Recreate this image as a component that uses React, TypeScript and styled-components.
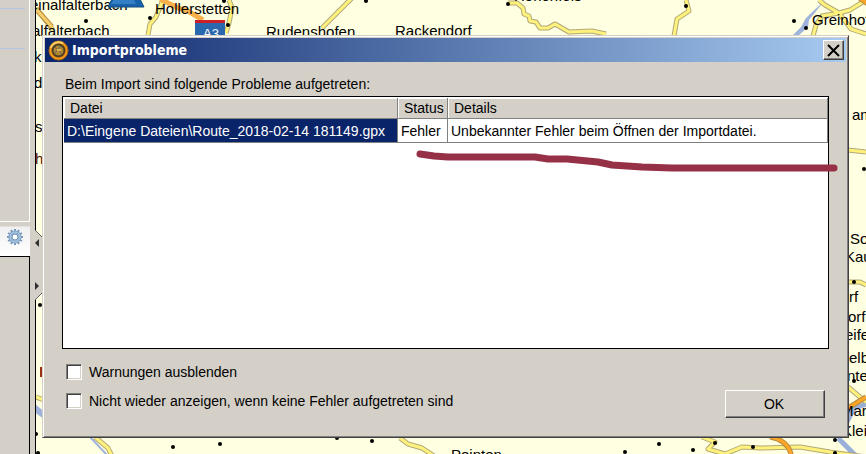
import React from "react";
import styled, { createGlobalStyle } from "styled-components";

const face = "#d4d0c8";
const navy = "#0a246a";
const sans = '"Liberation Sans", Arial, sans-serif';

const GlobalStyle = createGlobalStyle`
  *, *::before, *::after { box-sizing: border-box; }
  body { margin: 0; font: 14px/20px ${sans}; color: #000; background: ${face}; overflow: hidden; }
`;

const Page = styled.div`
  position: relative;
  display: grid;
  grid-template-columns: 30px 5px minmax(0, 1fr);
  height: 100vh;
  background: ${face};
`;

const Sidebar = styled.aside`
  display: flex;
  flex-direction: column;
  background: ${face};
`;

const TopPanel = styled.div`
  display: flex;
  flex-direction: column;
  gap: 39px;
  height: 222px;
  padding-top: 8px;
  border: solid #fff;
  border-width: 0 1px 1px 0;
`;

const Rule = styled.div`
  width: 25px;
  height: 1px;
  background: #b4c4e4;
`;

const ToolStrip = styled.div`
  display: flex;
  justify-content: center;
  height: 34px;
  padding: 6px 0 10px;
  background: linear-gradient(#d4d0c8 0 4px, #f0f0f0 5px, #fff);
`;

const IconButton = styled.button`
  display: flex;
  padding: 0;
  border: 0;
  background: none;
`;

const BottomPanel = styled.div`
  flex: 1;
  border: solid #000;
  border-width: 1px 1px 0 0;
`;

const MapPane = styled.main`
  position: relative;
  overflow: hidden;
  background: #ffffe1;
  border-left: 1px solid #000;
`;

const MapDrawing = styled.svg`
  display: block;
  width: 100%;
  height: 100%;
  font: 15px ${sans};
`;

const CollapseHandle = styled.svg`
  position: absolute;
  left: 35px;
  top: 228px;
`;

const Dialog = styled.section`
  position: absolute;
  top: 35px;
  left: 42px;
  right: 17px;
  padding: 1px;
  background: ${face};
  border: 1px solid;
  border-color: ${face} #404040 #404040 ${face};
  box-shadow: inset 1px 1px #fff, inset -1px -1px #808080;
`;

const TitleBar = styled.header`
  display: flex;
  align-items: center;
  gap: 3px;
  height: 24px;
  margin: 1px 1px 0;
  padding: 0 2px 0 3px;
  background: linear-gradient(90deg, ${navy}, #a6caf0);
  color: #fff;
`;

const Title = styled.h1`
  flex: 1;
  margin: 0;
  font: bold 14px/20px "DejaVu Sans Condensed", "DejaVu Sans", sans-serif;
`;

const RaisedButton = styled.button`
  display: flex;
  align-items: center;
  justify-content: center;
  padding: 0;
  font: inherit;
  color: #000;
  background: ${face};
  border: 1px solid;
  border-color: #fff #404040 #404040 #fff;
  box-shadow: inset -1px -1px #808080;
`;

const CloseButton = styled(RaisedButton)`
  width: 21px;
  height: 20px;
`;

const OkButton = styled(RaisedButton)`
  width: 100px;
  height: 28px;
  padding-right: 2px;
`;

const Body = styled.div`
  padding: 12px 18px 18px;
`;

const Intro = styled.p`
  margin: 0 0 2px;
  padding-left: 3px;
`;

const ListBox = styled.div`
  position: relative;
  height: 253px;
  background: #fff;
  border: 1px solid #000;
  padding: 1px 0 0 1px;
`;

const Table = styled.table`
  width: 100%;
  table-layout: fixed;
  border-collapse: separate;
  border-spacing: 0;
  white-space: nowrap;
`;

const Column = styled.col<{ $width?: number }>`
  width: ${(p) => (p.$width ? `${p.$width}px` : "auto")};
`;

const HeadCell = styled.th`
  height: 21px;
  padding: 1px 0 0 6px;
  font-weight: normal;
  line-height: 19px;
  text-align: left;
  background: ${face};
  border: solid #808080;
  border-width: 0 1px 1px 0;
  box-shadow: inset 1px 1px #fff;
`;

const Cell = styled.td<{ $selected?: boolean }>`
  height: 24px;
  padding: 0 0 0 3px;
  color: ${(p) => (p.$selected ? "#fff" : "#000")};
  background: ${(p) => (p.$selected ? navy : "#fff")};
  border: solid #808080;
  border-width: 0 1px 1px 0;
`;

const Marker = styled.svg`
  position: absolute;
  top: 50px;
  right: -12px;
`;

const Footer = styled.footer`
  display: flex;
  justify-content: space-between;
  align-items: flex-end;
  padding: 13px 4px 0 4px;
`;

const Options = styled.div`
  display: flex;
  flex-direction: column;
  gap: 9px;
  padding-bottom: 7px;
`;

const Option = styled.label`
  display: flex;
  align-items: center;
  gap: 7px;
`;

const CheckBox = styled.input`
  appearance: none;
  width: 16px;
  height: 16px;
  margin: 0;
  background: #fff;
  border: 1px solid;
  border-color: #808080 #fff #fff #808080;
  box-shadow: inset 1px 1px #404040, inset -1px -1px ${face};
`;

const yellowRoads = [
  "M36 8 L53 30",
  "M163 0 L156 17 L150 24 L148 35 M229 0 L232 8 L229 23 L226 33",
  "M354 -4 L322 28",
  "M508 3 L517 3 L523 8 L524 14 L529 16 L530 21 L536 22 L540 28 L548 28 L555 24 L569 32 L592 31 L606 34",
  "M686 0 L689 11 L677 19 L674 36",
  "M819 0 L825 5 L839 13 L850 10 L866 0 M839 13 L822 16 L816 25 L813 36 M839 13 L851 29 L866 34",
  "M848 150 L866 152",
  "M848 282 L860 282 L866 285",
  "M848 387 L866 402",
  "M400 438 L408 444 L422 448 L434 456",
  "M36 397 L44 400",
  "M95 437 L108 448 L112 456",
  "M702 437 L715 442 L708 449 L725 454 L742 447 L760 448 L800 447 L830 452 L866 457",
];

const mapDots: number[][] = [
  [86, 21], [150, 18], [228, 25], [224, 1], [366, 1], [508, 4], [686, 6],
  [794, 21], [806, 28], [864, 169], [854, 282], [40, 305], [173, 447],
  [220, 444], [337, 438], [372, 441], [625, 452], [659, 444], [693, 450],
  [715, 443], [753, 447], [835, 440], [835, 453], [854, 381], [36, 434], [38, 453],
];

const mapLabels: [number, number, string][] = [
  [30, 10, "einalfalterbach"], [32, 36, "alfalterbach"], [155, 14, "Hollerstetten"],
  [266, 37, "Rudenshofen"], [395, 36, "Rackendorf"], [514, 1, "Hohenfels"],
  [812, 25, "Greinhof"], [34, 62, "k"], [34, 88, "d"], [35, 132, "s"],
  [852, 120, "am"], [850, 244, "Sollach"], [845, 262, "Kauern"], [849, 302, "rf"],
  [848, 322, "orf"], [845, 340, "eifen"], [849, 363, "elb"], [847, 381, "nten"],
  [841, 416, "Marn"], [842, 436, "Klein"], [451, 460, "Pointen"],
];

function MapCanvas() {
  return (
    <MapDrawing viewBox="36 0 830 454" preserveAspectRatio="xMinYMin slice" aria-label="Karte">
      <path d="M825 0 L806 18 L801 27 L792 36 L798 36 L808 27 L809 20 Z" fill="#9fb3dd" />
      <path d="M36 406 L42 411 L44 418 L36 412 Z M90 437 L108 456" fill="#9fb3dd" stroke="#9fb3dd" strokeWidth="2" />
      <path d="M838 438 L858 458 M846 424 L854 408 L866 404" fill="none" stroke="#9bb0d8" strokeWidth="5" />
      {yellowRoads.map((d) => (
        <g key={d} fill="none" strokeLinejoin="round">
          <path d={d} stroke="#b2a878" strokeWidth="5" />
          <path d={d} stroke="#fff27c" strokeWidth="3" />
        </g>
      ))}
      <g fill="none" stroke="#b98b3e" strokeWidth="5">
        <path d="M37 10 L52 27" />
        <path d="M770 437 Q789 440 792 458 M848 408 L866 397 M858 -3 L868 4" />
      </g>
      <g fill="none" stroke="#f7b04b" strokeWidth="3">
        <path d="M37 10 L52 27" stroke="#f5ce6b" />
        <path d="M160 -1 L178 8 L188 11 L203 20" strokeWidth="5" />
        <path d="M770 437 Q789 440 792 458 M848 408 L866 397 M858 -3 L868 4" stroke="#ffa627" />
      </g>
      {mapDots.map(([x, y]) => (
        <circle key={`${x}-${y}`} cx={x} cy={y} r="2" />
      ))}
      <path d="M195 21 H225 V45 H195 Z" fill="#2968ad" />
      <path d="M195 20 H225 V23 H195 Z" fill="#cb2027" />
      <text x="203" y="38" fill="#fff" fontSize="13">A3</text>
      {mapLabels.map(([x, y, label]) => (
        <text key={label} x={x} y={y}>{label}</text>
      ))}
      <text x="35" y="164" fill="#501008">h</text>
      <path d="M113 -3 H139 L144 7 H108 Z" fill="#1762a8" stroke="#174d82" />
      <path d="M115 -2 H133 L136 4 H111 Z" fill="#347fc5" />
      <path d="M41 367 V377" stroke="#9b3010" strokeWidth="2" />
    </MapDrawing>
  );
}

function GearIcon() {
  const teeth = Array.from({ length: 12 }, (_, i) => i * 30);
  return (
    <svg width="18" height="18" viewBox="-9 -9 18 18" aria-hidden="true">
      {teeth.map((a) => (
        <path key={a} d="M-1 -8 H1 V-5 H-1 Z" fill="#7998b9" transform={`rotate(${a})`} />
      ))}
      <circle r="5" fill="#e9f2fa" stroke="#7fa3c8" strokeWidth="3" />
      <circle r="5" fill="none" stroke="#b4d0e8" />
      <circle r="3" fill="#fff" stroke="#688bb0" />
    </svg>
  );
}

function AppIcon() {
  return (
    <svg width="21" height="21" viewBox="0 0 21 21" aria-hidden="true">
      <circle cx="10.5" cy="10.5" r="9.5" fill="#f09a1c" stroke="#b5690c" />
      <path d="M3 8 A8 8 0 0 1 15 3.5" fill="none" stroke="#ffd269" strokeWidth="2" />
      <circle cx="10.5" cy="10.5" r="6" fill="#8b8d48" stroke="#573c1c" strokeWidth="2" />
      <path d="M6 9 L9 6 L14 8 L15 13 L11 15 L7 13 Z" fill="#b98533" />
      <path d="M7 7 L14 14 M13 6 L7 13" stroke="#536d5c" />
      <path d="M9 10 H13" stroke="#e2b14f" strokeWidth="2" />
    </svg>
  );
}

export default function App() {
  return (
    <Page>
      <GlobalStyle />
      <Sidebar>
        <TopPanel>
          <Rule />
          <Rule />
        </TopPanel>
        <ToolStrip>
          <IconButton aria-label="Einstellungen"><GearIcon /></IconButton>
        </ToolStrip>
        <BottomPanel />
      </Sidebar>
      <div />
      <MapPane><MapCanvas /></MapPane>
      <CollapseHandle width="8" height="74" viewBox="0 0 8 74" aria-hidden="true">
        <path d="M0 2 L8 10 V64 L0 72 Z" fill={face} />
        <path d="M0 2 L8 10 M0 72 L8 64" stroke="#606060" fill="none" />
        <path d="M4 11 V19 L0 15 Z M0 54 V62 L4 58 Z" fill="#303030" />
      </CollapseHandle>
      <Dialog role="dialog" aria-labelledby="dialog-title">
        <TitleBar>
          <AppIcon />
          <Title id="dialog-title">Importprobleme</Title>
          <CloseButton aria-label="Schließen">
            <svg width="13" height="13" viewBox="0 0 13 13" aria-hidden="true">
              <path d="M1 1 L12 12 M12 1 L1 12" stroke="#000" strokeWidth="2" />
            </svg>
          </CloseButton>
        </TitleBar>
        <Body>
          <Intro>Beim Import sind folgende Probleme aufgetreten:</Intro>
          <ListBox>
            <Table>
              <colgroup>
                <Column $width={334} />
                <Column $width={50} />
                <Column />
              </colgroup>
              <thead>
                <tr>
                  <HeadCell scope="col">Datei</HeadCell>
                  <HeadCell scope="col">Status</HeadCell>
                  <HeadCell scope="col">Details</HeadCell>
                </tr>
              </thead>
              <tbody>
                <tr>
                  <Cell $selected>D:\Eingene Dateien\Route_2018-02-14 181149.gpx</Cell>
                  <Cell>Fehler</Cell>
                  <Cell>Unbekannter Fehler beim Öffnen der Importdatei.</Cell>
                </tr>
              </tbody>
            </Table>
            <Marker width="426" height="30" viewBox="414 147 426 30" aria-hidden="true">
              <path
                d="M420 154 L434 156 L448 157 H535 L548 159 H567 L598 162 L612 165 L642 167 L672 168 H834"
                fill="none"
                stroke="#963046"
                strokeWidth="7"
                strokeLinecap="round"
                strokeLinejoin="round"
              />
            </Marker>
          </ListBox>
          <Footer>
            <Options>
              <Option><CheckBox type="checkbox" />Warnungen ausblenden</Option>
              <Option><CheckBox type="checkbox" />Nicht wieder anzeigen, wenn keine Fehler aufgetreten sind</Option>
            </Options>
            <OkButton>OK</OkButton>
          </Footer>
        </Body>
      </Dialog>
    </Page>
  );
}
